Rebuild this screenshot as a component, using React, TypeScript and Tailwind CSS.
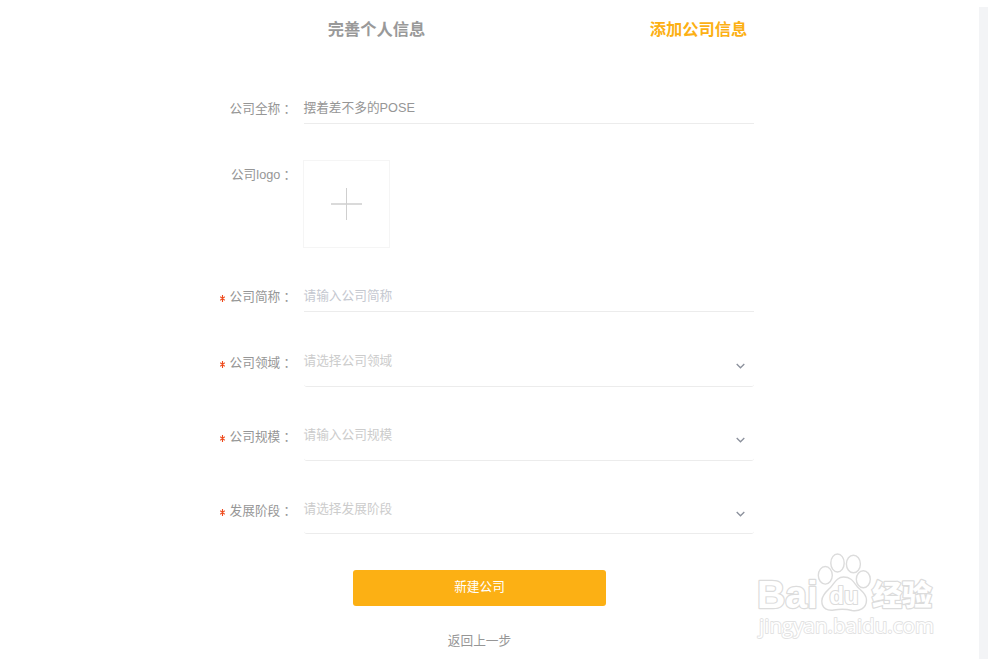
import { clsx } from 'clsx'

interface Field {
  label: string
  placeholder?: string
  value?: string
  required?: boolean
}

interface SelectField extends Field {
  className: string
}

const SELECTS: SelectField[] = [
  { label: '公司领域', placeholder: '请选择公司领域', className: 'mt-[35px] h-10' },
  { label: '公司规模', placeholder: '请输入公司规模', className: 'mt-[34px] h-10' },
  { label: '发展阶段', placeholder: '请选择发展阶段', className: 'mt-[34px] h-[39px]' },
]

function Label({ text, required }: { text: string; required?: boolean }) {
  return (
    <div className="mr-[11px] flex w-[293px] shrink-0 items-start justify-end pt-1.5 leading-5 text-[#969696]">
      {required && (
        <svg viewBox="0 0 5 7" className="mt-2 mr-[4.5px] h-[7px] w-[5px]" stroke="#ee4a1c" fill="none">
          <path d="M2.500 0v7M.2 1.700l4.600 3.600M4.800 1.700L.2 5.300" strokeWidth="1.1" />
        </svg>
      )}
      <span className="whitespace-nowrap">
        {text}
        {/* centred full-width colon */}
        <span className="inline-block translate-y-px font-['Noto_Sans_CJK_TC',sans-serif] leading-none" lang="zh-TW">
          ：
        </span>
      </span>
    </div>
  )
}

function TextField({ label, placeholder, value, required }: Field) {
  return (
    <>
      <Label text={label} required={required} />
      <div
        className={clsx(
          'w-[450px] border-b border-[#ececec] pt-[5px] leading-5',
          value ? 'text-[#969696]' : 'text-[#c5c8d0]',
        )}
      >
        <span className="-ml-[0.5px]">{value ?? placeholder}</span>
      </div>
    </>
  )
}

function Watermark() {
  return (
    <svg
      className="pointer-events-none absolute top-[550px] left-[752px] h-[94px] w-[190px] overflow-visible"
      viewBox="0 0 190 94"
      fill="#fff"
      stroke="#dcdcdc"
      strokeWidth="1.4"
      strokeLinejoin="round"
    >
      <g fontFamily="'Liberation Sans', sans-serif" paintOrder="stroke">
        <text x="5" y="58" fontSize="38" fontWeight="700" textLength="61" lengthAdjust="spacingAndGlyphs" strokeWidth="2.4">
          Bai
        </text>
        <text
          x="120"
          y="55.5"
          fontSize="29"
          fontWeight="900"
          fontFamily="'Noto Sans CJK SC', sans-serif"
          textLength="60"
          lengthAdjust="spacingAndGlyphs"
          strokeWidth="2.4"
        >
          经验
        </text>
        <text
          x="7"
          y="83"
          fontSize="20.5"
          fontFamily="'Open Sans', sans-serif"
          textLength="175"
          lengthAdjust="spacingAndGlyphs"
          stroke="#e2e2e2"
          strokeWidth="1.8"
        >
          jingyan.baidu.com
        </text>
      </g>
      <ellipse cx="73.300" cy="25.300" rx="7" ry="8.800" />
      <ellipse cx="85.500" cy="13" rx="6.700" ry="9" />
      <ellipse cx="101.400" cy="14" rx="7" ry="8.800" />
      <ellipse cx="111.300" cy="29.300" rx="7" ry="8.500" />
      <path d="M91.500 27C85 27 82.500 33 78.500 37.500C74 42 69.800 45.500 69.800 51C69.800 59 76 61 82 60C88 59 94 59 100 60.500C107 61.500 114.500 58.500 114.500 50C114.500 44 109.500 41 105.500 37C101 31 99 27 91.500 27Z" />
      <text
        x="77.5"
        y="54"
        fontSize="24"
        fontWeight="700"
        fontFamily="'Liberation Sans', sans-serif"
        textLength="29"
        lengthAdjust="spacingAndGlyphs"
        paintOrder="stroke"
        strokeWidth="2.2"
      >
        du
      </text>
    </svg>
  )
}

export default function App() {
  return (
    <div className="relative flex h-[659px] w-[988px] overflow-hidden bg-white font-['Liberation_Sans','Noto_Sans_CJK_SC',sans-serif] text-[12.7px]">
      <main className="w-[979px] shrink-0">
        <div className="flex h-[58px] items-center pl-[215.5px] text-[16.3px] font-bold">
          <div className="w-[322px] text-center text-[#999]">完善个人信息</div>
          <div className="w-[322px] text-center text-[#fcb014]">添加公司信息</div>
        </div>

        <div className="mt-[35px] flex h-[31px]">
          <TextField label="公司全称" value="摆着差不多的POSE" />
        </div>

        <div className="mt-9 flex h-22">
          <div className="-mt-px">
            <Label text="公司logo" />
          </div>
          <div className="-ml-px flex h-22 w-[87px] items-center justify-center border border-[#f5f5f5]">
            <svg viewBox="0 0 31 32" className="h-8 w-[31px]" fill="none" stroke="#cfcfcf">
              <path d="M0 16h31" strokeWidth="2" stroke="#dadada" />
              <path d="M15.500 0v32" />
            </svg>
          </div>
        </div>

        <div className="mt-[33px] flex h-[31px]">
          <TextField label="公司简称" placeholder="请输入公司简称" required />
        </div>

        {SELECTS.map(({ label, placeholder, className }) => (
          <div key={label} className={clsx('flex', className)}>
            <Label text={label} required />
            <div className="flex w-[450px] justify-between rounded-[3px] border-b border-[#ececec] pt-1 leading-5 text-[#ccc]">
              <span className="-ml-[0.5px]">{placeholder}</span>
              <svg viewBox="0 0 9 6" className="mt-3 mr-[9px] h-1.5 w-[9px]" fill="none" stroke="#8b909c">
                <path d="M.7 1L4.500 4.800L8.300 1" strokeWidth="1.3" />
              </svg>
            </div>
          </div>
        ))}

        <div className="mt-9 flex flex-col items-center pr-5">
          <button className="h-9 w-[253px] rounded-[3px] bg-[#fcb014] pb-px text-white">新建公司</button>
          <a className="mt-[25px] leading-5 text-[#969696]">返回上一步</a>
        </div>
      </main>
      <div className="mt-[7px] flex-1 bg-[#f3f4f6]" />
      <Watermark />
    </div>
  )
}
